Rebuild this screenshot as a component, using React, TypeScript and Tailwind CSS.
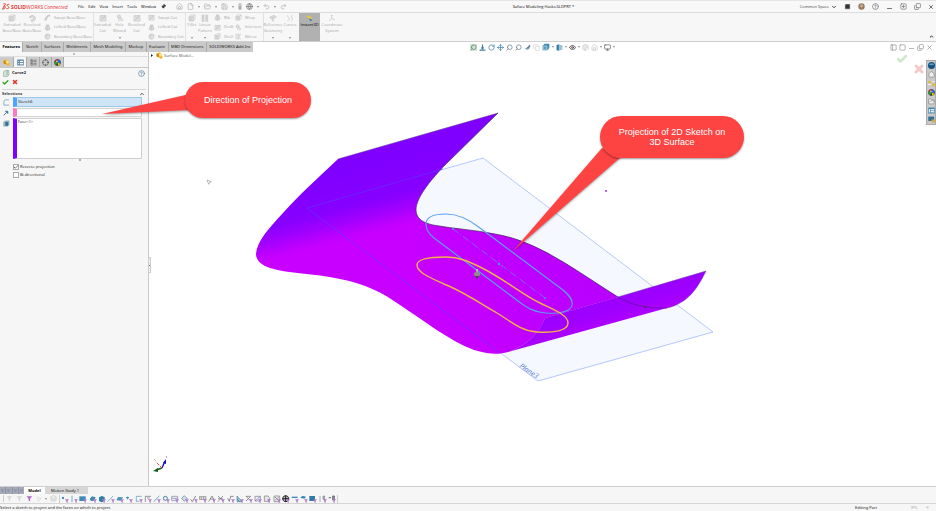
import React, { useState } from "react";
import {
  Box,
  Check,
  ChevronDown,
  ChevronUp,
  CircleHelp,
  Copy,
  Crosshair,
  Eye,
  File,
  FlipHorizontal2,
  FolderOpen,
  Globe,
  House,
  Layers,
  LayoutList,
  Minus,
  Monitor,
  MousePointer2,
  Move,
  PanelLeft,
  Pin,
  Redo2,
  RotateCw,
  Save,
  Search,
  Square,
  SquarePlus,
  SquareTerminal,
  Undo2,
  X,
  type LucideIcon,
} from "lucide-react";

interface Tool {
  label: string;
  kind: string;
}

interface BigTool extends Tool {
  width: string;
  menu?: boolean;
}

const menus = ["File", "Edit", "View", "Insert", "Tools", "Window"];

const commandTabs = [
  "Features",
  "Sketch",
  "Surfaces",
  "Weldments",
  "Mesh Modeling",
  "Markup",
  "Evaluate",
  "MBD Dimensions",
  "SOLIDWORKS Add-Ins",
];

const bossTools: BigTool[] = [
  { label: "Extruded Boss/Base", kind: "extrude", width: "w-5" },
  { label: "Revolved Boss/Base", kind: "revolve", width: "w-5" },
];

const bossList: Tool[] = [
  { label: "Swept Boss/Base", kind: "sweep" },
  { label: "Lofted Boss/Base", kind: "loft" },
  { label: "Boundary Boss/Base", kind: "boundary" },
];

const cutTools: BigTool[] = [
  { label: "Extruded Cut", kind: "cut", width: "w-[17px]" },
  { label: "Hole Wizard", kind: "hole", width: "w-[17px]", menu: true },
  { label: "Revolved Cut", kind: "cut", width: "w-[17px]" },
];

const cutList: Tool[] = [
  { label: "Swept Cut", kind: "cut" },
  { label: "Lofted Cut", kind: "loft" },
  { label: "Boundary Cut", kind: "boundary" },
];

const patternTools: BigTool[] = [
  { label: "Fillet", kind: "extrude", width: "w-3", menu: true },
  { label: "Linear Pattern", kind: "pattern", width: "w-[14px]", menu: true },
];

const ribList: Tool[] = [
  { label: "Rib", kind: "loft" },
  { label: "Draft", kind: "cut" },
  { label: "Shell", kind: "extrude" },
];

const wrapList: Tool[] = [
  { label: "Wrap", kind: "extrude" },
  { label: "Intersect", kind: "hole" },
  { label: "Mirror", kind: "mirror" },
];

const geometryTools: BigTool[] = [
  { label: "Reference Geometry", kind: "geometry", width: "w-[18px]", menu: true },
  { label: "Curves", kind: "curves", width: "w-4", menu: true },
];

// grey ribbon drawings on a 24 unit grid
const kinds: Record<string, React.ReactNode> = {
  extrude: (
    <>
      <path d="M3 8h13v13H3z" fill="#dcdcdc" />
      <path d="M3 8l5-5h13v13l-5 5M16 8l5-5" />
      <path d="M9 18v-7M6 14l3-3 3 3" />
    </>
  ),
  revolve: (
    <>
      <path d="M5 9a9 9 0 1 1 4 12l2-5a4 4 0 1 0-2-6z" fill="#dcdcdc" />
      <path d="M3 13l3-5 4 4" />
    </>
  ),
  sweep: (
    <>
      <path d="M6 17C10 10 9 4 21 5" strokeWidth="5" />
      <circle cx="6" cy="18" r="4" fill="#dcdcdc" />
    </>
  ),
  loft: (
    <>
      <path d="M9 3h7l5 15-9 4-9-4z" fill="#d6d6d6" />
      <path d="M12 22V9L9 3M12 9l4-6" />
    </>
  ),
  boundary: (
    <>
      <circle cx="12" cy="12" r="9" fill="#e6e6e6" />
      <path d="M3 12c6-5 12-5 18 0M12 3c-5 6-5 12 0 18" />
    </>
  ),
  cut: (
    <>
      <path d="M3 5h18v16H3z" fill="#e8e8e8" />
      <path d="M9 5v9h7V5M5 20L20 3" />
    </>
  ),
  hole: (
    <>
      <circle cx="9" cy="8" r="5" fill="#dcdcdc" />
      <path d="M9 13v9M14 11l7 7-6 3z" />
    </>
  ),
  pattern: <path d="M3 3h6v5H3zM14 3h6v5h-6zM3 10h6v5H3zM14 10h6v5h-6zM3 17h6v5H3zM14 17h6v5h-6z" fill="#e2e2e2" />,
  mirror: <path d="M3 4h5v16H3zM12 1v22M21 4h-5v16h5" />,
  geometry: (
    <>
      <path d="M2 10l13-6 7 5-13 7z" fill="#dcdcdc" />
      <path d="M12 9v13M9 19l3 3 3-3" />
    </>
  ),
  curves: <path d="M4 4c0 8 6 4 6 10s-5 3-5 7M20 4c-6 0-2 8-2 9s4 5-2 8" />,
  axes: <path d="M11 3v11l-8 7M11 14l10 4M8 6l3-3 3 3" />,
};

function RibbonIcon({ kind, className }: { kind: string; className: string }) {
  return (
    <svg viewBox="0 0 24 24" className={className} fill="none" stroke="#c2c2c2" strokeWidth="2">
      {kinds[kind]}
    </svg>
  );
}

function BigButton({ tool }: { tool: BigTool }) {
  return (
    <button className={`${tool.width} relative flex h-full flex-col items-center pt-px text-[#a6a6a6]`}>
      <RibbonIcon kind={tool.kind} className="size-2 shrink-0" />
      <span className="w-min text-center leading-[6px]">{tool.label}</span>
      {tool.menu && <Caret className="absolute bottom-[2px]" />}
    </button>
  );
}

function SmallList({ tools }: { tools: Tool[] }) {
  return (
    <div className="flex h-full flex-col justify-between py-px">
      {tools.map(tool => (
        <button key={tool.label} className="flex items-center gap-[3px] whitespace-nowrap text-[#a6a6a6]">
          <RibbonIcon kind={tool.kind} className="size-[7px]" />
          {tool.label}
        </button>
      ))}
    </div>
  );
}

function Caret({ className = "" }: { className?: string }) {
  return (
    <svg viewBox="0 0 6 4" className={`h-[2px] w-[2px] shrink-0 ${className}`}>
      <path d="M0 0h6L3 4z" fill="#666" />
    </svg>
  );
}

function IconButton({ icon: Icon, label, className }: { icon: LucideIcon; label: string; className: string }) {
  return (
    <button aria-label={label} className={className}>
      <Icon className="size-[7px]" strokeWidth={2.5} />
    </button>
  );
}

function ColorWheel({ className }: { className: string }) {
  return (
    <svg viewBox="0 0 24 24" className={className}>
      <circle cx="12" cy="12" r="11" fill="#222" />
      <path d="M12 12V1A11 11 0 0 0 2 8z" fill="#d92b2b" />
      <path d="M12 12V1a11 11 0 0 1 10 15z" fill="#2f6fd0" />
      <path d="M12 12L2 8a11 11 0 0 0 5 14z" fill="#2fa13a" />
      <path d="M12 12l10 4a11 11 0 0 1-8 7z" fill="#f0c419" />
      <circle cx="10" cy="8" r="3" fill="#fff" opacity="0.7" />
    </svg>
  );
}

function PartIcon({ className }: { className: string }) {
  return (
    <svg viewBox="0 0 24 24" className={className}>
      <path d="M2 5l8-4 8 3v7l4 3v7l-7 2-6-5-7-3z" fill="#f2b632" />
      <path d="M2 5l8 3v10l-8-3z" fill="#c98a14" />
      <circle cx="15" cy="10" r="5" fill="#fbe08a" />
    </svg>
  );
}

function TitleBar() {
  return (
    <header className="flex h-[13px] shrink-0 items-center border-t border-b border-t-[#e6e6e6] border-b-[#dcdcdc] bg-[#f8f8f8] pl-[2px]">
      <div className="flex w-[76px] items-center text-[5px] text-[#e2342d]">
        <svg viewBox="0 0 26 22" className="mr-px h-[7px] w-2" fill="none" stroke="#e2342d" strokeWidth="3">
          <path d="M4 3c10-3 11 2 2 6M2 20C12 18 14 8 6 10L2 20M24 4c-8-2-9 4-4 7s2 8-6 7" />
        </svg>
        <strong>SOLID</strong>
        <span>WORKS</span>
        <em className="ml-px">Connected</em>
      </div>
      <nav className="flex items-center gap-1 text-black">
        {menus.map(menu => (
          <button key={menu}>{menu}</button>
        ))}
        <Pin className="ml-px size-[5px] rotate-45" fill="#444" />
      </nav>
      <div className="ml-[10px] flex items-center gap-1 text-[#b4b4b4]">
        <IconButton icon={House} label="Home" className="" />
        <IconButton icon={File} label="New" className="" />
        <Caret />
        <IconButton icon={FolderOpen} label="Open" className="" />
        <Caret />
        <IconButton icon={Save} label="Save" className="" />
        <Caret />
        <svg viewBox="0 0 12 24" className="h-[7px] w-1">
          <rect x="1" y="1" width="10" height="22" rx="4" fill="#aaa" />
          <circle cx="6" cy="7" r="3" fill="#eee" />
        </svg>
        <IconButton icon={Globe} label="Options" className="text-[#777]" />
        <Caret />
        <IconButton icon={Undo2} label="Undo" className="" />
        <Caret />
        <IconButton icon={Redo2} label="Redo" className="" />
      </div>
      <h1 className="mx-auto text-black">Suface Modeling Hacks.SLDPRT *</h1>
      <div className="flex items-center gap-[7px] pr-[2px] text-[#444]">
        <button className="flex items-center gap-[2px]">
          Common Space
          <ChevronDown className="size-[6px]" strokeWidth={4} />
        </button>
        <SquareTerminal className="size-[7px] text-white" fill="#333" strokeWidth={2} />
        <svg viewBox="0 0 24 24" className="size-[7px]">
          <circle cx="12" cy="12" r="11" fill="#9a7a5c" />
          <circle cx="12" cy="10" r="5" fill="#c9b39a" />
        </svg>
        <IconButton icon={CircleHelp} label="Help" className="text-[#777]" />
        <IconButton icon={Minus} label="Minimize" className="pt-[3px]" />
        <IconButton icon={SquarePlus} label="Expand" className="text-[#777]" />
        <IconButton icon={Copy} label="Restore" className="-scale-y-100 text-[#777]" />
        <button aria-label="Close">
          <X className="size-[6px]" strokeWidth={3} />
        </button>
      </div>
    </header>
  );
}

function Ribbon() {
  return (
    <section className="relative flex h-[29px] shrink-0 border-b border-[#cfcfcf] bg-[#f7f7f7]">
      <div className="flex w-[94px] border-r border-[#e2e2e2] pl-[2px]">
        {bossTools.map(tool => (
          <BigButton key={tool.label} tool={tool} />
        ))}
        <div className="pl-[2px]">
          <SmallList tools={bossList} />
        </div>
      </div>
      <div className="flex w-[92px] border-r border-[#e2e2e2]">
        {cutTools.map(tool => (
          <BigButton key={tool.label} tool={tool} />
        ))}
        <div className="pl-[3px]">
          <SmallList tools={cutList} />
        </div>
      </div>
      <div className="flex w-[78px] border-r border-[#e2e2e2]">
        {patternTools.map(tool => (
          <BigButton key={tool.label} tool={tool} />
        ))}
        <div className="w-[23px] pl-[2px]">
          <SmallList tools={ribList} />
        </div>
        <SmallList tools={wrapList} />
      </div>
      <div className="flex w-[35px]">
        {geometryTools.map(tool => (
          <BigButton key={tool.label} tool={tool} />
        ))}
      </div>
      <button className="flex w-[21px] flex-col items-center bg-[#b1b1b1] pt-[2px] text-black">
        <svg viewBox="0 0 24 24" className="size-[7px] shrink-0">
          <path d="M2 3l9-1 11 12-8 4z" fill="#f3c63a" />
          <path d="M8 10l14 6-6 6z" fill="#3f7fae" />
        </svg>
        <span className="leading-[6px]">Instant3D</span>
      </button>
      <BigButton tool={{ label: "Coordinate System", kind: "axes", width: "w-6" }} />
      <button aria-label="Collapse ribbon" className="absolute right-[2px] bottom-[2px]">
        <ChevronUp className="size-[5px]" strokeWidth={4} />
      </button>
    </section>
  );
}

function ViewTools() {
  return (
    <div className="flex items-center gap-[2px] text-[#3f86ac]">
      <IconButton icon={Search} label="Zoom to fit" className="-scale-x-100 bg-[#d9e4c0]" />
      <svg viewBox="0 0 24 24" className="size-[7px]" fill="none" stroke="#3f7c9c" strokeWidth="4">
        <path d="M12 2v14M8 12l4 4 4-4M2 21h20" />
      </svg>
      <IconButton icon={RotateCw} label="Rotate" className="" />
      <IconButton icon={Move} label="Pan" className="" />
      <IconButton icon={Search} label="Zoom" className="-scale-x-100 text-[#6a8090]" />
      <IconButton icon={Search} label="Zoom to area" className="-scale-x-100 text-[#6a8090]" />
      <svg viewBox="0 0 24 24" className="size-[7px]">
        <path d="M2 17l9-6 11 1-9 8z" fill="#7ba7b8" />
        <path d="M10 13L20 2l2 6-8 8z" fill="#60808f" />
      </svg>
      <IconButton icon={Copy} label="Section" className="text-[#d5d5d5]" />
      <svg viewBox="0 0 24 24" className="size-2">
        <path d="M2 8l6-6h14v13l-6 7H2z" fill="#3f8db5" />
        <path d="M2 8h14v14H2z" fill="#9cc7dc" />
        <path d="M5 11h8v8H5z" fill="#5d9fbd" />
      </svg>
      <Caret />
      <svg viewBox="0 0 24 24" className="size-[7px]">
        <path d="M2 3l8-2v22l-8-2z" fill="#2f7ba6" />
        <path d="M10 1l12 4v15l-12 3z" fill="#9dc3d6" />
      </svg>
      <Caret />
      <IconButton icon={Eye} label="Hide or show" className="text-[#333]" />
      <Caret />
      <ColorWheel className="size-[7px] opacity-20 grayscale" />
      <IconButton icon={House} label="Scene" className="text-[#c8c8c8]" />
      <Caret />
      <IconButton icon={Monitor} label="View settings" className="text-[#666]" />
      <Caret />
    </div>
  );
}

function CommandTabs() {
  const [active, setActive] = useState("Features");

  return (
    <div className="relative z-10 grid h-2 shrink-0 grid-cols-[148px_1fr] bg-white">
      <nav className="z-10 flex w-[253px] gap-px bg-[#ababab] font-['Noto_Sans',sans-serif]">
        {commandTabs.map(tab => (
          <button
            key={tab}
            onClick={() => setActive(tab)}
            className={`grow px-[2px] ${active === tab ? "bg-[#f7f7f7] font-bold text-black" : "bg-[#c9c9c9] text-[#222]"}`}
          >
            {tab}
          </button>
        ))}
      </nav>
      <div className="grid h-[10px] grid-cols-[1fr_auto_1fr] items-center">
        <div />
        <ViewTools />
        <div className="flex items-center justify-end gap-[2px] pr-[3px] text-[#999]">
          <IconButton icon={PanelLeft} label="Split left" className="" />
          <IconButton icon={Square} label="Split right" className="" />
          <IconButton icon={Minus} label="Minimize document" className="pt-[3px]" />
          <IconButton icon={Copy} label="Restore document" className="-scale-y-100" />
          <IconButton icon={X} label="Close document" className="" />
        </div>
      </div>
    </div>
  );
}

function Option({ label, checked }: { label: string; checked?: boolean }) {
  return (
    <label className="relative flex h-2 items-center gap-px text-[#222]">
      <input
        type="checkbox"
        defaultChecked={checked}
        className="peer size-[6px] appearance-none border border-[#aaa] bg-white"
      />
      <Check className="invisible absolute left-0 size-[6px] text-[#444] peer-checked:visible" strokeWidth={3} />
      <span>{label}</span>
    </label>
  );
}

function PropertyPanel() {
  return (
    <aside className="relative flex w-[149px] shrink-0 flex-col border-r border-[#c8c8c8] bg-[#f6f6f6] text-[#222]">
      <div className="flex h-[7px] justify-center border-b border-[#dedede] pt-[3px]">
        <span className="size-[2px] rounded-full bg-[#aaa]" />
      </div>
      <div className="flex h-[11px] border-b border-[#c8c8c8]">
        <button aria-label="Feature tree" className="flex w-[14px] items-center justify-center border-r border-[#aaa] bg-[#cbcbcb]">
          <PartIcon className="size-[7px]" />
        </button>
        <button aria-label="Properties" className="flex w-[13px] items-center justify-center border-r border-[#aaa]">
          <svg viewBox="0 0 24 24" className="size-[7px]">
            <path d="M1 2h22v20H1z" fill="#3d7191" />
            <path d="M9 6h12v4H9zM9 13h12v6H9z" fill="#fff" />
            <path d="M3 6h4v4H3zM3 13h4v6H3z" fill="#b8d6e6" />
          </svg>
        </button>
        <button aria-label="Configurations" className="flex w-[13px] items-center justify-center border-r border-[#aaa] bg-[#cbcbcb]">
          <LayoutList className="size-[7px] text-[#555]" />
        </button>
        <button aria-label="Dimensions" className="flex w-[12px] items-center justify-center border-r border-[#aaa] bg-[#cbcbcb]">
          <Crosshair className="size-[7px] text-[#444]" />
        </button>
        <button aria-label="Appearances" className="flex w-[12px] items-center justify-center border-r border-[#aaa] bg-[#cbcbcb]">
          <ColorWheel className="size-[7px]" />
        </button>
      </div>
      <div className="flex h-[10px] items-center gap-[2px] px-[3px]">
        <svg viewBox="0 0 24 24" className="size-[7px]">
          <path d="M2 6l6-4h12v16l-5 4H2z" fill="#d7e6dc" stroke="#7c9c93" strokeWidth="2" />
          <path d="M14 2v16" stroke="#5b8b83" strokeWidth="2" />
        </svg>
        <h2 className="font-bold">Curve2</h2>
        <CircleHelp className="ml-auto size-[7px] text-[#3f6f92]" />
      </div>
      <div className="flex h-[11px] items-start gap-[3px] pt-px pl-[2px]">
        <button aria-label="OK">
          <Check className="size-[7px] text-[#37a51f]" strokeWidth={5} />
        </button>
        <button aria-label="Cancel">
          <X className="size-[6px] text-[#dd3420]" strokeWidth={6} />
        </button>
      </div>
      <div className="mx-[2px] flex h-2 items-center justify-between border-t border-[#d5d5d5] pr-px">
        <h3 className="font-bold text-[#444]">Selections</h3>
        <ChevronUp className="size-[6px]" strokeWidth={3} />
      </div>
      <div className="grid grid-cols-[10px_1fr] gap-y-px pr-[6px] pl-[3px]">
        <svg viewBox="0 0 24 24" className="mt-[2px] size-[7px]" fill="none" stroke="#7aa7c7" strokeWidth="3">
          <path d="M21 3H9a6 6 0 0 0-6 6v12h18" />
        </svg>
        <input
          aria-label="Sketch to project"
          defaultValue="Sketch6"
          className="h-[10px] w-full min-w-0 border border-l-4 border-[#9fc8e6] border-l-[#4da3ff] bg-[#cfe4f7] pb-[2px] pl-px"
        />
        <svg viewBox="0 0 24 24" className="mt-[2px] size-[6px]" fill="none" stroke="#3d7ba0" strokeWidth="4">
          <path d="M3 21L14 10" />
          <path d="M10 5h9v9z" fill="#3d7ba0" />
        </svg>
        <input
          aria-label="Direction of projection"
          className="h-[9px] w-full min-w-0 border border-l-4 border-[#d3d3d3] border-l-[#ff78c0] bg-white"
        />
        <svg viewBox="0 0 24 24" className="mt-[2px] size-[7px]">
          <path d="M1 7l7-5h14v14l-6 6H1z" fill="#8fb3c2" />
          <path d="M8 7h10v13H8z" fill="#2f7396" />
        </svg>
        <textarea
          aria-label="Projection faces"
          defaultValue="Face<1>"
          className="h-[41px] w-full resize-none border border-l-4 border-[#cfcfcf] border-l-[#8000ff] bg-white pl-px leading-[5px]"
        />
      </div>
      <span className="ml-[79px] size-[2px] rounded-full bg-[#999]" />
      <div className="mt-[2px] pl-[13px]">
        <Option label="Reverse projection" checked />
        <Option label="Bi-directional" />
      </div>
      <button
        aria-label="Collapse panel"
        className="absolute top-[207px] -right-[3px] z-10 flex h-4 w-[3px] items-center justify-center border border-[#ccc] bg-[#f2f2f2]"
      >
        <span className="size-px bg-[#777]" />
      </button>
    </aside>
  );
}

function Model() {
  return (
    <svg viewBox="149 50 787 437" className="absolute top-0 left-0 h-[437px] w-[787px] overflow-visible" fill="none">
      <defs>
        <linearGradient id="bend" gradientUnits="userSpaceOnUse" x1="325" y1="180" x2="341" y2="243">
          <stop offset="0" stopColor="#8000ff" />
          <stop offset="0.5" stopColor="#8800ff" />
          <stop offset="0.72" stopColor="#a400ff" />
          <stop offset="0.92" stopColor="#c200ff" />
          <stop offset="1" stopColor="#c800ff" />
        </linearGradient>
        <linearGradient id="shade" gradientUnits="userSpaceOnUse" x1="420" y1="300" x2="580" y2="240">
          <stop offset="0" stopColor="#b400ff" stopOpacity="0" />
          <stop offset="1" stopColor="#b400ff" stopOpacity="0.8" />
        </linearGradient>
        <linearGradient id="lip" gradientUnits="userSpaceOnUse" x1="606" y1="300" x2="613" y2="325">
          <stop offset="0" stopColor="#9a00ff" />
          <stop offset="0.5" stopColor="#a000ff" />
          <stop offset="1" stopColor="#b000ff" />
        </linearGradient>
      </defs>

      {/* reference plane behind the surface */}
      <path d="M307 208L483 158L713 332L538 381Z" fill="#f5f8ff" stroke="#b4c8fb" />

      {/* surface body */}
      <path
        d="M338 159L498 113L443 167C430 181 416 198 416 210C416 219 424 223 433 225C454 229 478 230 500 235C540 243 575 270 618 297L545 318C539 332 530 344 508 352C498 355 487 354 474 350C448 340 426 322 400 305C383 293 366 284 340 279C312 273 290 274 270 268C261 265 256 260 256 254C257 241 269 228 283 213C300 194 318 178 338 159Z"
        fill="url(#bend)"
      />
      <path
        d="M416 210C416 219 424 223 433 225C454 229 478 230 500 235C540 243 575 270 618 297L545 318C539 332 530 344 508 352L400 305Z"
        fill="url(#shade)"
      />
      <path d="M618 297L706 271C698 287 689 303 667 308L508 352C530 344 539 332 545 318Z" fill="url(#lip)" />

      {/* edges */}
      <path
        d="M498 113L443 167C430 181 416 198 416 210C416 219 424 223 433 225C454 229 478 230 500 235C540 243 575 270 618 297"
        stroke="#4b2b66"
        strokeWidth="0.7"
      />
      <path d="M618 297C630 304 645 309 667 308" stroke="#5a1b8c" strokeWidth="0.7" />
      <path d="M667 308C689 303 698 287 706 271L618 297" stroke="#6a3ca0" strokeWidth="0.5" />
      <path d="M338 159L498 113" stroke="#5a3c8c" strokeWidth="0.5" />
      <path d="M443 169L307 208L500 353" stroke="#5f38ff" strokeOpacity="0.6" />
      <circle cx="645" cy="307" r="1" fill="#4b2b66" />

      {/* sketch slot, its centre line and the projected curve */}
      <path
        d="M426 224C426 217 434 214 446 214C458 214 470 220 480 228L563 290C570 296 573 300 572 305C571 312 558 314 545 313C533 312 526 307 518 301L434 238C429 234 426 230 426 224Z"
        stroke="#5ba0f4"
        strokeWidth="1.2"
      />
      <path d="M453 229L545 298" stroke="#7a70ff" strokeWidth="0.9" strokeDasharray="7 2 1 2" />
      <circle cx="453" cy="229" r="1" fill="#5b8cf4" />
      <circle cx="499" cy="264" r="1.3" fill="#5b8cf4" />
      <circle cx="545" cy="298" r="1" fill="#5b8cf4" />
      <path
        d="M417 265C417 259 430 257 446 257C460 257 470 262 482 268C504 279 520 293 540 303C554 310 568 315 568 323C568 331 553 333 537 332C521 331 510 321 497 313C478 302 462 291 444 284C433 279 417 273 417 265Z"
        stroke="#f2b24a"
        strokeWidth="1.4"
      />
      <path d="M477 269v5" stroke="#b9c0b0" strokeWidth="2" />
      <path d="M474 273l3-2 3 2v2l-3 3-3-3z" fill="#8b9088" />
      <path d="M475 276h4l-2 3z" fill="#444" />
      <circle cx="606" cy="191" r="1" fill="#9333ea" />
      <text x="519" y="367" transform="rotate(34 519 367)" className="text-[7px] italic" fill="#5b7fd6">
        Plane3
      </text>

      {/* orientation triad */}
      <path d="M162 468L165 461" stroke="#1515b5" strokeWidth="1.4" />
      <path d="M163 463l3-4 0 5z" fill="#1515b5" />
      <path d="M162 468L156 470" stroke="#0d5c14" strokeWidth="1.4" />
      <path d="M153 471l5-3 0 4z" fill="#0d5c14" />
      <path d="M162 468L156 462" stroke="#e05050" strokeDasharray="3 1" />
      <path d="M154 459l2 2" stroke="#f0a0a0" />
      <path d="M166 456l1 2" stroke="#a0a0f0" />

      {/* callout tails */}
      <g fill="#fe4443" className="drop-shadow-[0_1px_1px_#0006]">
        <path d="M102 114L190 94L190 110Z" />
        <path d="M513 251L602 148L622 156Z" />
      </g>
    </svg>
  );
}

function TaskPane() {
  return (
    <div className="absolute top-[10px] right-0 flex w-[10px] flex-col items-center gap-[2px] border border-[#aaa] bg-[#c9c9c9] py-px">
      <svg viewBox="0 0 24 24" className="size-[7px]">
        <circle cx="12" cy="12" r="12" fill="#14507e" />
        <path d="M3 9c6-6 13-6 18 0-6 3-12 3-18 0z" fill="#5d9cc4" />
      </svg>
      <House className="size-[7px] text-[#777]" fill="#eee" />
      <svg viewBox="0 0 24 24" className="size-[7px]">
        <path d="M1 3h10v7H1zM13 12h10v9H13z" fill="#e7b93c" />
        <path d="M13 4h10v3H13zM1 14h10v3H1z" fill="#f5f5f5" />
      </svg>
      <ColorWheel className="size-[7px]" />
      <FolderOpen className="size-[7px] text-[#777]" fill="#f5f5f5" />
      <svg viewBox="0 0 24 24" className="size-[7px]">
        <path d="M1 2h22v20H1z" fill="#3b83a8" />
        <path d="M9 7h12v5H9zM9 14h12v5H9zM3 7h4v12H3z" fill="#e0eef5" />
      </svg>
      <svg viewBox="0 0 24 24" className="size-[7px]">
        <path d="M1 2h20v15H1z" fill="#2e6f94" />
        <path d="M12 12h11v10H12z" fill="#d7a93b" />
      </svg>
    </div>
  );
}

function Viewport() {
  return (
    <main className="relative min-w-0 flex-1 bg-white">
      <div className="flex items-center gap-px pt-[2px] pl-[2px]">
        <svg viewBox="0 0 4 6" className="mr-[2px] h-[3px] w-[2px]">
          <path d="M0 0l4 3-4 3z" fill="#222" />
        </svg>
        <PartIcon className="size-[7px]" />
        <span className="text-[#555]">Surface Model...</span>
      </div>
      <Model />
      <p className="absolute top-[32px] left-[36px] flex h-9 w-[126px] items-center justify-center rounded-full bg-[#fe4443] font-['Liberation_Sans',sans-serif] text-[9px] text-white shadow-[0_1px_2px_#0006]">
        Direction of Projection
      </p>
      <p className="absolute top-[66px] left-[451px] flex h-[42px] w-36 items-center justify-center rounded-full bg-[#fe4443] px-3 text-center font-['Liberation_Sans',sans-serif] text-[9px] leading-[10px] text-white shadow-[0_1px_2px_#0006]">
        Projection of 2D Sketch on 3D Surface
      </p>
      <MousePointer2 className="absolute top-[129px] left-[57px] size-[6px] text-[#777]" fill="#fff" />
      <Check className="absolute top-[3px] right-[28px] size-3 text-[#cfe8c9]" strokeWidth={5} />
      <X className="absolute top-[13px] right-[11px] size-3 text-[#f3c9c9]" strokeWidth={6} />
      <TaskPane />
    </main>
  );
}

// selection filter glyphs, every one carries the small purple funnel
const filterShapes: React.ReactNode[] = [
  <circle cx="6" cy="9" r="3.5" fill="#3a8ab3" />,
  <path d="M6 2v20" stroke="#3a8ab3" strokeWidth="2" />,
  <path d="M1 4h19v14H1z" fill="#3a8ab3" />,
  <path d="M2 12l7-8 11 3-5 10-9 1z" fill="#3f8aa8" />,
  <path d="M3 7l8-4 9 3v12l-9 4-8-4z" fill="#2f7ca6" />,
  <path d="M2 20L18 3" stroke="#4a90b5" strokeWidth="2" />,
  <path d="M1 16l5-10 15 1-6 10z" fill="#4a96ba" />,
  <path d="M3 8h9M8 5v8" stroke="#3a8ab3" strokeWidth="3" />,
  <path d="M20 4H4v15h9" stroke="#4a90b5" strokeWidth="2" fill="none" />,
  <path d="M4 21V4h17M9 9h8" stroke="#667" strokeWidth="2" fill="none" />,
  <path d="M2 20L19 3" stroke="#4a90b5" strokeWidth="2.5" />,
  <circle cx="10" cy="10" r="6" stroke="#4a7f9c" strokeWidth="3" fill="none" />,
  <path d="M2 4h18v13H2zM2 10h18" stroke="#88a" strokeWidth="2" fill="#e6f0f4" />,
  <path d="M10 2l8 8-8 9-8-9z" stroke="#5a7f92" strokeWidth="2" fill="#cfe0e8" />,
  <path d="M2 13l5 7L17 3" stroke="#555" strokeWidth="2" fill="none" />,
  <path d="M1 5h20v8H1zM7 5v8M14 5v8" stroke="#777" strokeWidth="2" fill="#eee" />,
  <path d="M2 20L12 3l7 14M6 12h12" stroke="#666" strokeWidth="2" fill="none" />,
  <path d="M3 3l15 14M3 20L18 3M3 11h14" stroke="#667" strokeWidth="2" />,
  <path d="M2 10l5 9L11 4h9" stroke="#555" strokeWidth="2" fill="none" />,
  <path d="M3 3v17h15zM3 12l8 8" stroke="#3f7f9f" strokeWidth="2" fill="#9cc" />,
  <path d="M3 4l14 14M17 4L3 18M3 4h14" stroke="#667" strokeWidth="2" />,
  <path d="M3 4h16v14H3zM3 18L19 4" stroke="#778" strokeWidth="2" fill="#eef" />,
  <path d="M4 3h11l4 4v12H4z" stroke="#777" strokeWidth="2" fill="#e8e8e8" />,
  <path d="M3 3h17v17H3zM6 17L17 6M6 6l11 11" stroke="#777" strokeWidth="2" fill="#eee" />,
  <path d="M11 2a9 9 0 1 0 .1 0M11 2v18M2 11h18" stroke="#222" strokeWidth="3" fill="#bbb" />,
  <path d="M2 5h18v4H2z" fill="#3a8ab3" />,
  <path d="M1 8c5-6 10-6 17-2l-5 5z" fill="#3a8ab3" />,
  <path d="M1 3h17v15H1z" fill="#2e7ba5" />,
  <path d="M3 3v18M12 3h5v10h-5z" stroke="#889" strokeWidth="2" fill="#aaa" />,
  <path d="M2 8h7M14 3h5v12h-5z" stroke="#667" strokeWidth="3" fill="#aaa" />,
];

function FilterBar() {
  return (
    <div className="flex h-[10px] shrink-0 items-center border-b border-[#d5d5d5] bg-[#f6f6f6] pl-[3px]">
      <div className="flex w-[56px] items-center gap-[3px] border-l border-[#ccc] pl-[2px]">
        {["#d8d8d8", "#d8d8d8", "#b565c8"].map((color, i) => (
          <svg key={i} viewBox="0 0 24 24" className="size-[7px]">
            <path d="M2 4h19l-7 9v9l-5-3v-6z" fill={color} />
          </svg>
        ))}
        <MousePointer2 className="size-[6px] text-[#ccc]" />
        <Caret />
        <Layers className="size-[7px] text-[#bbb]" />
      </div>
      <div className="flex w-[279px] items-center justify-between border-x border-[#ccc] px-px">
        {filterShapes.map((shape, i) => (
          <button key={i} aria-label={`Filter ${i + 1}`}>
            <svg viewBox="0 0 24 24" className="size-2" fill="none">
              {shape}
              <path d="M12 13h12l-4 5v6l-4-2v-4z" fill="#b27cc9" />
            </svg>
          </button>
        ))}
      </div>
    </div>
  );
}

export default function App() {
  return (
    <div className="flex h-screen flex-col overflow-hidden bg-[#f6f6f6] font-['Open_Sans','Noto_Sans',sans-serif] text-[4px] leading-[6px]">
      <TitleBar />
      <Ribbon />
      <CommandTabs />
      <div className="flex min-h-0 flex-1">
        <PropertyPanel />
        <Viewport />
      </div>
      <div className="flex h-2 shrink-0 border-t border-[#cfcfcf] bg-[#f6f6f6] font-bold">
        <div className="grid w-6 grid-cols-4 gap-px bg-[#8d90a0]">
          {["First", "Previous", "Next", "Last"].map(label => (
            <button key={label} aria-label={label} className="flex items-center justify-center bg-[#a6a9b8]">
              <Box className="size-[3px] text-[#777b90]" />
            </button>
          ))}
        </div>
        <button className="w-[21px] bg-white text-black">Model</button>
        <button className="w-[43px] bg-[#d6d6d6] pr-[3px] font-normal text-black">Motion Study 1</button>
      </div>
      <FilterBar />
      <footer className="flex h-[7px] shrink-0 items-center justify-between font-['Noto_Sans',sans-serif] text-[#222]">
        <span>Select a sketch to project and the faces on which to project.</span>
        <div className="flex items-center gap-[34px] pr-[7px]">
          <span>Editing Part</span>
          <span className="flex items-center gap-[9px] text-[#aaa]">
            IPS
            <FlipHorizontal2 className="size-[3px]" />
          </span>
        </div>
      </footer>
    </div>
  );
}
